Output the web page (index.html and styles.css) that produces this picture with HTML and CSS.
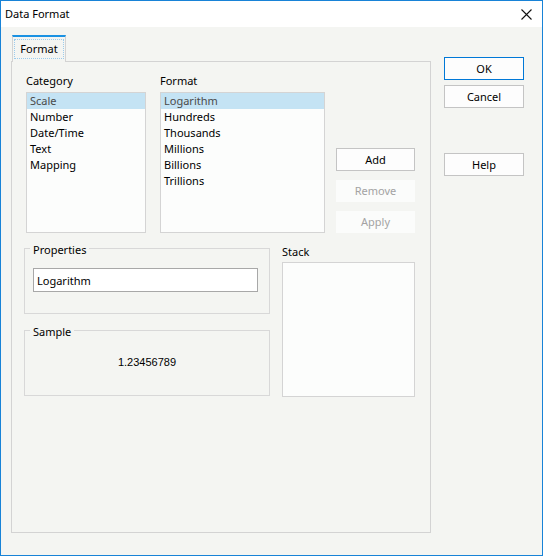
FILE: index.html
```html
<!DOCTYPE html>
<html lang="en">

<head>
    <meta charset="UTF-8" />
    <title>Data Format</title>
    <link rel="stylesheet" href="styles.css">
</head>

<body>
    <div class="dialog">
        <div class="titlebar">
            <span class="title">Data Format</span>
            <span class="close">
                <svg width="11" height="11" viewBox="0 0 11 11">
                    <path d="M0.5 0.5 L10.5 10.5 M10.5 0.5 L0.5 10.5" stroke="#111" stroke-width="1.1" fill="none" />
                </svg>
            </span>
        </div>
        <div class="dialog-body">
            <div class="tabs">
                <div class="tab-strip">
                    <div class="tab active"><span class="tab-label">Format</span></div>
                </div>
                <div class="tab-panel">
                    <div class="top-row">
                        <div class="field field-category">
                            <div class="field-label">Category</div>
                            <div class="listbox">
                                <div class="list-item selected">Scale</div>
                                <div class="list-item">Number</div>
                                <div class="list-item">Date/Time</div>
                                <div class="list-item">Text</div>
                                <div class="list-item">Mapping</div>
                            </div>
                        </div>
                        <div class="field field-format">
                            <div class="field-label">Format</div>
                            <div class="listbox">
                                <div class="list-item selected">Logarithm</div>
                                <div class="list-item">Hundreds</div>
                                <div class="list-item">Thousands</div>
                                <div class="list-item">Millions</div>
                                <div class="list-item">Billions</div>
                                <div class="list-item">Trillions</div>
                            </div>
                        </div>
                        <div class="actions">
                            <button class="btn">Add</button>
                            <button class="btn disabled">Remove</button>
                            <button class="btn disabled">Apply</button>
                        </div>
                    </div>
                    <div class="bottom-row">
                        <div class="groups">
                            <fieldset class="group group-properties">
                                <legend>Properties</legend>
                                <input class="text-input" type="text" value="Logarithm">
                            </fieldset>
                            <fieldset class="group group-sample">
                                <legend>Sample</legend>
                                <div class="sample-value">1.23456789</div>
                            </fieldset>
                        </div>
                        <div class="stack">
                            <div class="field-label">Stack</div>
                            <div class="stack-box"></div>
                        </div>
                    </div>
                </div>
            </div>
            <div class="dialog-buttons">
                <button class="btn btn-main default">OK</button>
                <button class="btn btn-main">Cancel</button>
                <button class="btn btn-main btn-help">Help</button>
            </div>
        </div>
    </div>
</body>

</html>
```
FILE: styles.css
```css
body {
    margin: 0;
    font-family: 'Segoe UI', 'Noto Sans', sans-serif;
    font-size: 11px;
    line-height: 16px;
    color: #000;
}

.dialog {
    width: 543px;
    height: 556px;
    box-sizing: border-box;
    border: 1px solid #1883d7;
    background: #f4f5f2;
    display: flex;
    flex-direction: column;
}

.titlebar {
    height: 26px;
    background: #fff;
    display: flex;
    align-items: center;
    justify-content: space-between;
    padding: 0 10px 0 4px;
}

.close {
    display: flex;
    width: 11px;
    height: 11px;
}

.dialog-body {
    display: flex;
    padding: 8px 0 0 10px;
}

.tabs {
    width: 420px;
}

.tab-strip {
    display: flex;
    padding-left: 1px;
}

.tab {
    position: relative;
    z-index: 1;
    width: 54px;
    height: 27px;
    margin-bottom: -1px;
    box-sizing: border-box;
    border: 1px solid #d3d3d3;
    border-top: 2px solid #1a92e3;
    border-bottom: none;
    background: #f4f5f2;
    padding-top: 2px;
    display: flex;
    justify-content: center;
    align-items: flex-start;
}

.tab-label {
    border: 1px dotted #9ccbec;
    padding: 1px 5px;
    line-height: 16px;
}

.tab-panel {
    height: 472px;
    box-sizing: border-box;
    border: 1px solid #d3d3d3;
    background: #f4f5f2;
    padding-top: 11px;
}

.top-row {
    display: flex;
    padding-left: 14px;
}

.field-label {
    height: 16px;
    margin-bottom: 3px;
}

.field-category {
    width: 120px;
}

.field-format {
    width: 165px;
    margin-left: 14px;
}

.listbox {
    height: 141px;
    box-sizing: border-box;
    border: 1px solid #d4d4d4;
    background: #fcfdfc;
}

.list-item {
    height: 16px;
    padding-left: 3px;
}

.list-item.selected {
    background: #c4e3f4;
    color: #4a4a4a;
}

.actions {
    width: 79px;
    margin-left: 11px;
    padding-top: 75px;
    display: flex;
    flex-direction: column;
    gap: 9px;
}

.btn {
    font-family: inherit;
    font-size: 11px;
    line-height: 16px;
    color: #000;
    width: 79px;
    height: 23px;
    padding: 0;
    box-sizing: border-box;
    border: 1px solid #c4c4c4;
    background: #fdfdfd;
}

.btn.disabled {
    height: 22px;
    border-color: #fbfcfb;
    background: #fbfcfb;
    color: #a3a3a3;
}

.bottom-row {
    display: flex;
    align-items: flex-start;
    padding-left: 12px;
    margin-top: 7px;
}

.groups {
    width: 246px;
}

.group {
    margin: 0;
    box-sizing: border-box;
    width: 246px;
    border: 1px solid #d8d8d8;
    padding: 12px 8px 0;
    min-inline-size: 0;
}

.group legend {
    padding: 4px 3px 0;
    margin-left: -3px;
    line-height: 12px;
}

.group-properties {
    height: 74px;
}

.group-sample {
    height: 74px;
    margin-top: 8px;
    padding-top: 16px;
}

.text-input {
    display: block;
    width: 225px;
    height: 24px;
    margin: 0;
    box-sizing: border-box;
    border: 1px solid #a8a8a8;
    background: #fff;
    padding: 0 3px;
    font-family: inherit;
    font-size: 11px;
    color: #000;
    outline: none;
}

.sample-value {
    text-align: center;
    font-family: 'Liberation Sans', Arial, sans-serif;
    font-size: 11px;
    line-height: 16px;
}

.stack {
    margin-left: 12px;
    margin-top: 4px;
}

.stack .field-label {
    margin-bottom: 2px;
}

.stack-box {
    width: 133px;
    height: 135px;
    box-sizing: border-box;
    border: 1px solid #d4d4d4;
    background: #fcfdfc;
}

.dialog-buttons {
    margin-left: 13px;
    padding-top: 22px;
    display: flex;
    flex-direction: column;
    gap: 5px;
}

.btn-main {
    width: 80px;
}

.btn-main.default {
    border-color: #0078d7;
}

.btn-help {
    margin-top: 40px;
}
```
